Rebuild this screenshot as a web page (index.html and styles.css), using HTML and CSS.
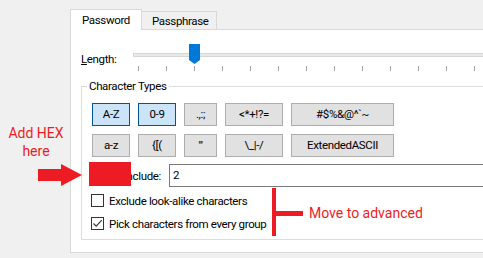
FILE: index.html
```html
<!DOCTYPE html>
<html>
<head>
<meta charset="utf-8">
<link rel="stylesheet" href="styles.css">
</head>
<body>

<div class="dialog">
    <div class="tabs">
        <div class="tab active">Password</div>
        <div class="tab">Passphrase</div>
    </div>

    <div class="panel">
        <div class="length_row">
            <div class="length_label"><u>L</u>ength:</div>
            <div class="slider">
                <div class="track"></div>
                <div class="ticks">
                    <span></span><span></span><span></span><span></span><span></span>
                    <span></span><span></span><span></span><span></span><span></span>
                    <span></span><span></span><span></span><span></span>
                </div>
                <div class="thumb"></div>
            </div>
        </div>

        <div class="group">
            <div class="group_title">Character Types</div>
            <div class="btn_row first">
                <div class="btn on w38">A-Z</div>
                <div class="btn on w38">0-9</div>
                <div class="btn w33">.,:;</div>
                <div class="btn w58">&lt;*+!?=</div>
                <div class="btn w103">#$%&amp;@^`~</div>
            </div>
            <div class="btn_row">
                <div class="btn w38">a-z</div>
                <div class="btn w38">{[(</div>
                <div class="btn w33">"'</div>
                <div class="btn w58">\_|-/</div>
                <div class="btn w103">ExtendedASCII</div>
            </div>

            <div class="include_row">
                <div class="include_label">Min. include:</div>
                <div class="textbox">2</div>
            </div>

            <div class="check_row">
                <span class="checkbox"></span>
                <span>Exclude look-alike characters</span>
            </div>
            <div class="check_row">
                <span class="checkbox">
                    <svg width="11" height="11" viewBox="0 0 11 11"><path d="M1.5 5.5 L4.2 8.2 L9.8 2.2" fill="none" stroke="#333" stroke-width="1.1"/></svg>
                </span>
                <span>Pick characters from every group</span>
            </div>
        </div>
    </div>
</div>

<!-- anotacoes em vermelho por cima do print -->
<div class="note note_hex">Add HEX<br>here</div>
<div class="red_box"></div>
<svg class="marks" width="483" height="258">
    <rect x="38" y="169" width="23" height="12" fill="#ed1c24"/>
    <polygon points="61,164 82,175 61,186" fill="#ed1c24"/>
    <rect x="272" y="188" width="4" height="48" fill="#ed1c24"/>
    <rect x="276" y="211" width="27" height="5" fill="#ed1c24"/>
</svg>
<div class="note note_move">Move to advanced</div>

</body>
</html>
```

FILE: styles.css
```css
body{
    margin: 0;
    width: 483px;
    height: 258px;
    overflow: hidden;
    position: relative;
    background-color: #f0f0f0;
    font-family: Roboto, "Liberation Sans", sans-serif;
    font-size: 11.5px;
    letter-spacing: -0.35px;
    color: #000;
}

.dialog{
    padding: 9px 0 0 70px;
    width: 700px;
}

.tabs{
    display: flex;
    align-items: flex-end;
    height: 20px;
}

.tab{
    box-sizing: border-box;
    height: 18px;
    width: 75px;
    padding-left: 10px;
    line-height: 18px;
    border: 1px solid #d9d9d9;
    border-bottom: none;
    border-left: none;
    background-color: #f0f0f0;
}

.tab.active{
    position: relative;
    z-index: 1;
    height: 21px;
    width: 72px;
    margin-bottom: -1px;
    padding-left: 11px;
    padding-top: 1px;
    border-left: 1px solid #d9d9d9;
    background-color: #fff;
}

.panel{
    box-sizing: border-box;
    height: 224px;
    border: 1px solid #d9d9d9;
    background-color: #fff;
    padding-left: 10px;
}

.length_row{
    display: flex;
    margin-top: 14px;
}

.length_label{
    width: 52px;
    margin-top: 7px;
    line-height: 16px;
}

.slider{
    position: relative;
    width: 500px;
    height: 27px;
}

.track{
    box-sizing: border-box;
    margin-top: 9px;
    height: 4px;
    border: 1px solid #d6d6d6;
    background-color: #e7eaea;
}

.ticks{
    display: flex;
    gap: 27px;
    margin-top: 9px;
    padding-left: 5px;
}

.ticks span{
    width: 1px;
    height: 5px;
    background-color: #a3a3a3;
}

.thumb{
    position: absolute;
    left: 56px;
    top: 0;
    width: 11px;
    height: 20px;
    background-color: #0078d7;
    clip-path: polygon(0 0, 11px 0, 11px 16px, 5.5px 20px, 0 16px);
}

.group{
    margin-top: 15px;
    width: 600px;
    border: 1px solid #dcdcdc;
    padding: 0 0 4px 10px;
}

.group_title{
    width: fit-content;
    margin: -9px 0 0 -5px;
    padding: 0 2px;
    line-height: 16px;
    background-color: #fff;
}

.btn_row{
    display: flex;
    gap: 8px;
    margin-top: 8px;
}

.btn_row.first{
    margin-top: 9px;
}

.btn{
    box-sizing: border-box;
    height: 23px;
    line-height: 21px;
    text-align: center;
    border: 1px solid #adadad;
    background-color: #e1e1e1;
}

.btn.on{
    border-color: #005499;
    background-color: #cce4f7;
}

.w38{ width: 38px; }
.w33{ width: 33px; }
.w58{ width: 58px; }
.w103{ width: 103px; }

.include_row{
    display: flex;
    align-items: center;
    margin-top: 7px;
    height: 23px;
}

.include_label{
    box-sizing: border-box;
    width: 77px;
    padding-right: 8px;
    text-align: right;
    white-space: nowrap;
}

.textbox{
    box-sizing: border-box;
    width: 400px;
    height: 23px;
    line-height: 21px;
    padding-left: 3px;
    border: 1px solid #7a7a7a;
}

.check_row{
    display: flex;
    align-items: center;
    gap: 5px;
    height: 23px;
    margin-left: -1px;
}

.include_row + .check_row{
    margin-top: 2px;
}

.checkbox{
    box-sizing: border-box;
    display: flex;
    align-items: center;
    justify-content: center;
    width: 13px;
    height: 13px;
    border: 1px solid #333;
    background-color: #fff;
}

.note{
    position: absolute;
    color: #ed1c24;
    font-size: 14px;
    letter-spacing: 0;
    line-height: 18px;
}

.note_hex{
    left: 0;
    top: 124px;
    width: 72px;
    text-align: center;
}

.note_move{
    left: 309px;
    top: 204px;
}

.red_box{
    position: absolute;
    left: 89px;
    top: 162px;
    width: 42px;
    height: 24px;
    background-color: #ed1c24;
}

.marks{
    position: absolute;
    left: 0;
    top: 0;
}
```
